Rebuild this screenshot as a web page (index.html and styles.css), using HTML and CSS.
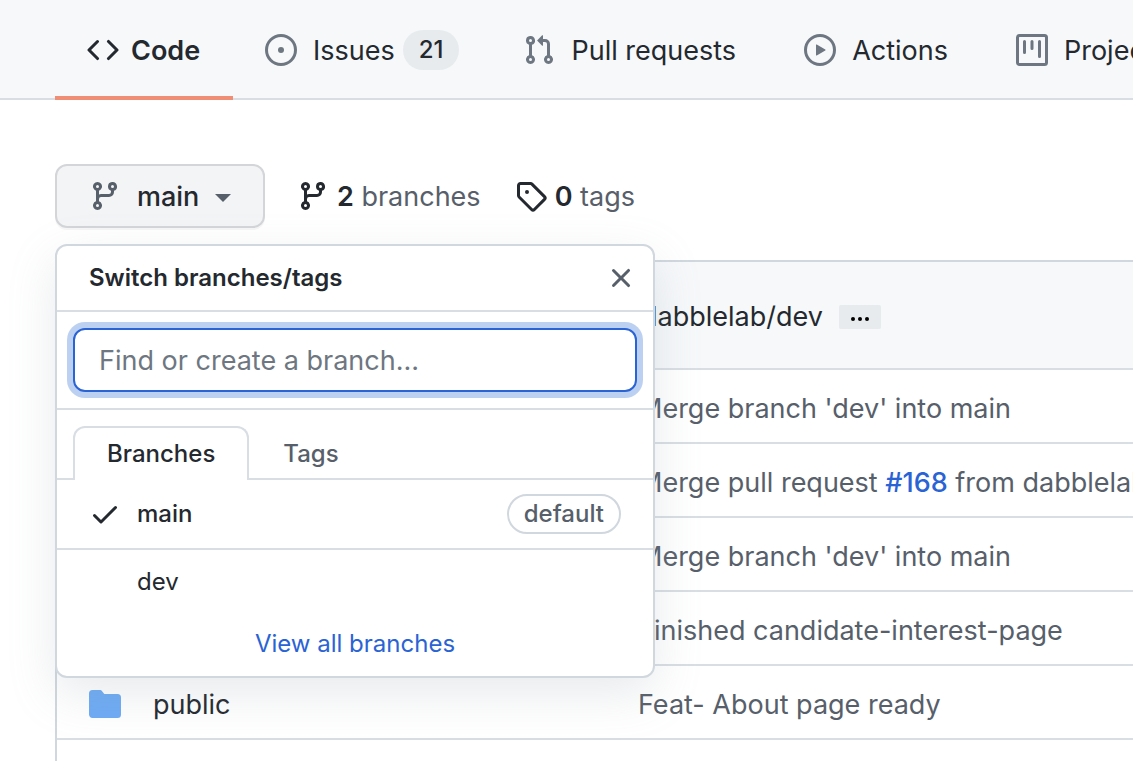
FILE: index.html
```html
<!DOCTYPE html>
<html lang="en">
<head>
<meta charset="utf-8">
<title>Repository branches</title>
<link rel="stylesheet" href="styles.css">
</head>
<body>
<svg class="sprite" aria-hidden="true">
  <symbol id="branch" viewBox="0 0 16 16"><path fill-rule="evenodd" d="M11.75 2.5a.75.75 0 100 1.5.75.75 0 000-1.5zm-2.25.75a2.25 2.25 0 113 2.122V6A2.5 2.5 0 0110 8.5H6a1 1 0 00-1 1v1.128a2.251 2.251 0 11-1.5 0V5.372a2.25 2.25 0 111.5 0v1.836A2.492 2.492 0 016 7h4a1 1 0 001-1v-.628A2.25 2.25 0 019.5 3.25zM4.25 12a.75.75 0 100 1.5.75.75 0 000-1.5zM3.5 3.25a.75.75 0 111.5 0 .75.75 0 01-1.5 0z"/></symbol>
</svg>
<nav class="repo-nav" aria-label="Repository">
  <a class="nav-tab nav-tab-current" href="#code" aria-current="page">
    <svg class="icon" viewBox="0 0 16 16"><path fill-rule="evenodd" d="M4.72 3.22a.75.75 0 011.06 1.06L2.06 8l3.72 3.72a.75.75 0 11-1.06 1.06L.47 8.53a.75.75 0 010-1.06l4.25-4.25zm6.56 0a.75.75 0 10-1.06 1.06L13.94 8l-3.72 3.72a.75.75 0 101.06 1.06l4.25-4.25a.75.75 0 000-1.06l-4.25-4.25z"/></svg>
    <span class="nav-text">Code</span>
  </a>
  <a class="nav-tab nav-tab-counted" href="#issues">
    <svg class="icon" viewBox="0 0 16 16"><path d="M8 9.5a1.5 1.5 0 100-3 1.5 1.5 0 000 3z"/><path fill-rule="evenodd" d="M8 0a8 8 0 100 16A8 8 0 008 0zM1.5 8a6.5 6.5 0 1113 0 6.5 6.5 0 01-13 0z"/></svg>
    <span class="nav-text">Issues</span>
    <span class="counter">21</span>
  </a>
  <a class="nav-tab" href="#pulls">
    <svg class="icon" viewBox="0 0 16 16"><path fill-rule="evenodd" d="M7.177 3.073L9.573.677A.25.25 0 0110 .854v4.792a.25.25 0 01-.427.177L7.177 3.427a.25.25 0 010-.354zM3.75 2.5a.75.75 0 100 1.5.75.75 0 000-1.5zm-2.25.75a2.25 2.25 0 113 2.122v5.256a2.251 2.251 0 11-1.5 0V5.372A2.25 2.25 0 011.5 3.25zM11 2.5h-1V4h1a1 1 0 011 1v5.628a2.251 2.251 0 101.5 0V5A2.5 2.5 0 0011 2.5zm1 10.25a.75.75 0 111.5 0 .75.75 0 01-1.5 0zM3.75 12a.75.75 0 100 1.5.75.75 0 000-1.5z"/></svg>
    <span class="nav-text">Pull requests</span>
  </a>
  <a class="nav-tab" href="#actions">
    <svg class="icon" viewBox="0 0 16 16"><path fill-rule="evenodd" d="M1.5 8a6.5 6.5 0 1113 0 6.5 6.5 0 01-13 0zM8 0a8 8 0 100 16A8 8 0 008 0zM6.379 5.227A.25.25 0 006 5.442v5.117a.25.25 0 00.379.214l4.264-2.559a.25.25 0 000-.428L6.379 5.227z"/></svg>
    <span class="nav-text">Actions</span>
  </a>
  <a class="nav-tab" href="#projects">
    <svg class="icon" viewBox="0 0 16 16"><path fill-rule="evenodd" d="M1.75 0A1.75 1.75 0 000 1.75v12.5C0 15.216.784 16 1.75 16h12.5A1.75 1.75 0 0016 14.25V1.75A1.75 1.75 0 0014.25 0H1.75zM1.5 1.75a.25.25 0 01.25-.25h12.5a.25.25 0 01.25.25v12.5a.25.25 0 01-.25.25H1.75a.25.25 0 01-.25-.25V1.75zM11.75 3a.75.75 0 00-.75.75v7.5a.75.75 0 001.5 0v-7.5a.75.75 0 00-.75-.75zm-8.25.75a.75.75 0 011.5 0v5.5a.75.75 0 01-1.5 0v-5.5zM8 3a.75.75 0 00-.75.75v3.5a.75.75 0 001.5 0v-3.5A.75.75 0 008 3z"/></svg>
    <span class="nav-text">Projects</span>
  </a>
</nav>

<main class="content">
  <div class="toolbar">
    <div class="branch-picker">
      <button class="branch-button" type="button" aria-expanded="true">
        <svg class="icon"><use href="#branch"/></svg>
        <span class="toolbar-text">main</span>
        <span class="caret"></span>
      </button>
      <section class="popover" aria-label="Switch branches/tags">
        <header class="popover-header">
          <h2 class="popover-title">Switch branches/tags</h2>
          <button class="close-button" type="button" aria-label="Close">
            <svg class="icon" viewBox="0 0 16 16"><path fill-rule="evenodd" d="M3.72 3.72a.75.75 0 011.06 0L8 6.94l3.22-3.22a.75.75 0 111.06 1.06L9.06 8l3.22 3.22a.75.75 0 11-1.06 1.06L8 9.06l-3.22 3.22a.75.75 0 01-1.06-1.06L6.94 8 3.72 4.78a.75.75 0 010-1.06z"/></svg>
          </button>
        </header>
        <div class="filter">
          <input class="filter-input" type="text" placeholder="Find or create a branch..." aria-label="Find or create a branch">
        </div>
        <div class="ref-tabs" role="tablist">
          <button class="ref-tab ref-tab-selected" type="button" role="tab" aria-selected="true">Branches</button>
          <button class="ref-tab" type="button" role="tab" aria-selected="false">Tags</button>
        </div>
        <a class="ref-item ref-item-current" href="#main">
          <svg class="icon" viewBox="0 0 16 16"><path fill-rule="evenodd" d="M13.78 4.22a.75.75 0 010 1.06l-7.25 7.25a.75.75 0 01-1.06 0L2.22 9.28a.75.75 0 011.06-1.06L6 10.94l6.72-6.72a.75.75 0 011.06 0z"/></svg>
          <span class="ref-name">main</span>
          <span class="label">default</span>
        </a>
        <a class="ref-item" href="#dev">
          <span class="icon"></span>
          <span class="ref-name">dev</span>
        </a>
        <a class="view-all" href="#branches">View all branches</a>
      </section>
    </div>
    <a class="stat" href="#branches">
      <svg class="icon"><use href="#branch"/></svg>
      <span class="toolbar-text"><strong>2</strong> branches</span>
    </a>
    <a class="stat" href="#tags">
      <svg class="icon" viewBox="0 0 16 16"><path fill-rule="evenodd" d="M2.5 7.775V2.75a.25.25 0 01.25-.25h5.025a.25.25 0 01.177.073l6.25 6.25a.25.25 0 010 .354l-5.025 5.025a.25.25 0 01-.354 0l-6.25-6.25a.25.25 0 01-.073-.177zm-1.5 0V2.75C1 1.784 1.784 1 2.75 1h5.025c.464 0 .91.184 1.238.513l6.25 6.25a1.75 1.75 0 010 2.474l-5.026 5.026a1.75 1.75 0 01-2.474 0l-6.25-6.25A1.75 1.75 0 011 7.775zM6 5a1 1 0 100 2 1 1 0 000-2z"/></svg>
      <span class="toolbar-text"><strong>0</strong> tags</span>
    </a>
  </div>

  <div class="files">
    <div class="commit-bar">
      <a class="commit-title" href="#commit">dabblelab/dev</a>
      <button class="more-button" type="button" aria-label="Show full commit message"><svg class="dots" viewBox="0 0 18 4"><circle cx="2" cy="2" r="2"/><circle cx="9" cy="2" r="2"/><circle cx="16" cy="2" r="2"/></svg></button>
    </div>
    <table class="file-table">
      <tbody>
        <tr><td class="file-name"></td><td>Merge branch 'dev' into main</td></tr>
        <tr><td class="file-name"></td><td>Merge pull request <a class="issue-link" href="#168">#168</a> from dabblelab/dev</td></tr>
        <tr><td class="file-name"></td><td>Merge branch 'dev' into main</td></tr>
        <tr><td class="file-name"></td><td>Finished candidate-interest-page</td></tr>
        <tr>
          <td class="file-name"><a class="file-link" href="#public"><svg class="icon folder" viewBox="0 0 16 16"><path d="M1.75 1A1.75 1.75 0 000 2.75v10.5C0 14.216.784 15 1.75 15h12.5A1.75 1.75 0 0016 13.25v-8.5A1.75 1.75 0 0014.25 3h-6.5a.25.25 0 01-.2-.1l-.9-1.2c-.33-.44-.85-.7-1.4-.7h-3.5z"/></svg><span class="file-text">public</span></a></td>
          <td>Feat- About page ready</td>
        </tr>
        <tr><td class="file-name"></td><td></td></tr>
      </tbody>
    </table>
  </div>
</main>
</body>
</html>
```
FILE: styles.css
```css
* {
  box-sizing: border-box;
}

body {
  margin: 0;
  height: 100vh;
  overflow: hidden;
  background: #fff;
  color: #24292f;
  font: 27px/40px Inter, "Liberation Sans", sans-serif;
}

a {
  color: inherit;
  text-decoration: none;
}

button {
  font: inherit;
  color: inherit;
  cursor: pointer;
}

.sprite {
  display: none;
}

.icon {
  flex: none;
  width: 32px;
  height: 32px;
  fill: currentColor;
}

/* Repository navigation */
.repo-nav {
  display: flex;
  height: 100px;
  padding-left: 55px;
  background: #f6f8fa;
  box-shadow: inset 0 -2px #d8dee4;
  white-space: nowrap;
}

.nav-tab {
  display: flex;
  flex: none;
  align-items: center;
  padding: 4px 36px 0 32px;
  border-bottom: 4px solid transparent;
}

.nav-tab .icon {
  margin-right: 16px;
  color: #6e7781;
}

.nav-tab-counted {
  padding-right: 32px;
}

.nav-tab-current {
  min-width: 178px;
  padding-right: 32px;
  border-bottom-color: #f08d75;
  font-weight: 600;
}

.nav-tab-current .icon {
  margin-right: 12px;
  color: #24292f;
}

.nav-text,
.toolbar-text,
.file-text {
  padding-top: 2px;
}

.counter {
  margin-left: 8px;
  padding: 0 16px;
  border-radius: 20px;
  background: #e8ebee;
  font-size: 24px;
  font-weight: 500;
}

/* Branch toolbar */
.content {
  padding: 64px 0 0 55px;
}

.toolbar {
  display: flex;
  align-items: center;
  margin-bottom: 32px;
}

.branch-picker {
  position: relative;
  margin-right: 32px;
}

.branch-button {
  display: flex;
  align-items: center;
  width: 210px;
  height: 64px;
  padding: 0 30px 0 32px;
  border: 2px solid #d3d5d8;
  border-radius: 12px;
  background: #f3f4f6;
  box-shadow: 0 2px 0 rgba(27, 31, 36, 0.04);
  font-weight: 500;
}

.branch-button .icon {
  margin-right: 16px;
  color: #57606a;
}

.caret {
  margin: 4px 0 0 16px;
  border: 8px solid transparent;
  border-top-color: #57606a;
  border-bottom-width: 0;
}

.stat {
  display: flex;
  align-items: center;
  gap: 8px;
  margin-right: 34px;
  color: #57606a;
}

.stat .icon,
.stat strong {
  color: #24292f;
  font-weight: 600;
}

/* Branch popover */
.popover {
  position: absolute;
  z-index: 1;
  top: 80px;
  left: 0;
  width: 600px;
  border: 2px solid #d0d7de;
  border-radius: 12px;
  background: #fff;
  box-shadow: 0 16px 48px rgba(140, 149, 159, 0.2);
  font-size: 24px;
}

.popover-header {
  display: flex;
  align-items: center;
  justify-content: space-between;
  height: 66px;
  padding: 0 16px 0 32px;
  border-bottom: 2px solid #d8dee4;
}

.popover-title {
  margin: 0;
  font-size: 24px;
  font-weight: 600;
}

.close-button {
  display: flex;
  padding: 0;
  border: 0;
  background: none;
  color: #57606a;
}

.filter {
  padding: 16px;
  border-bottom: 2px solid #d8dee4;
}

.filter-input {
  display: block;
  width: 100%;
  height: 64px;
  padding: 0 24px;
  border: 2px solid #2a63d4;
  border-radius: 12px;
  outline: none;
  box-shadow: 0 0 0 6px #bcd1f2;
  color: #24292f;
  font: inherit;
  font-size: 27px;
}

.filter-input::placeholder {
  color: #6e7781;
  opacity: 1;
}

.ref-tabs {
  display: flex;
  padding: 16px 16px 0;
  box-shadow: inset 0 -2px #d8dee4;
}

.ref-tab {
  height: 54px;
  padding: 0 32px;
  border: 2px solid transparent;
  border-bottom: 0;
  background: none;
  color: #57606a;
  font-weight: 500;
}

.ref-tab-selected {
  border-color: #d8dee4;
  border-radius: 12px 12px 0 0;
  background: #fff;
  color: #24292f;
}

.ref-item {
  display: flex;
  align-items: center;
  height: 64px;
  padding: 0 32px;
}

.ref-item-current {
  height: 70px;
  border-bottom: 2px solid #d8dee4;
  font-weight: 500;
}

.ref-name {
  flex: 1;
  margin-left: 16px;
}

.label {
  padding: 0 15px;
  border: 2px solid #d0d7de;
  border-radius: 20px;
  color: #57606a;
  line-height: 36px;
}

.view-all {
  display: block;
  padding: 10px 32px 12px;
  color: #2a63d4;
  text-align: center;
}

/* File list */
.files {
  border: 2px solid #d0d7de;
  border-width: 2px 0 0 2px;
  border-radius: 12px 0 0;
  white-space: nowrap;
}

.commit-bar {
  display: flex;
  align-items: center;
  gap: 16px;
  height: 108px;
  padding: 4px 0 0 584px;
  border-bottom: 2px solid #d8dee4;
  border-radius: 12px 0 0;
  background: #f6f8fa;
}

.more-button {
  display: flex;
  align-items: center;
  justify-content: center;
  width: 42px;
  height: 24px;
  padding: 4px 0 0;
  border: 0;
  border-radius: 2px;
  background: #e8ebee;
}

.dots {
  width: 18px;
  height: 4px;
}

.file-table {
  width: 100%;
  border-spacing: 0;
  table-layout: fixed;
  color: #57606a;
}

.file-table td {
  height: 74px;
  padding: 6px 0 0;
  border-bottom: 2px solid #d8dee4;
}

.file-table .file-name {
  width: 581px;
  padding: 4px 0 0 32px;
  color: #24292f;
}

.file-link {
  display: flex;
  align-items: center;
  gap: 32px;
}

.folder {
  color: #6eabf5;
}

.issue-link {
  color: #2a63d4;
  font-weight: 500;
}
```
